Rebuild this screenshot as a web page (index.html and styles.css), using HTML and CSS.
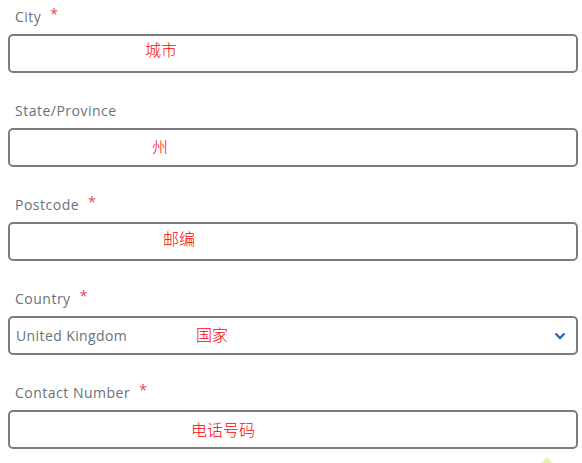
FILE: index.html
```html
<!DOCTYPE html>
<html>
<head>
<meta charset="utf-8">
<link rel="stylesheet" href="styles.css">
</head>
<body>
<form class="form">
  <div class="field">
    <label class="label">City<span class="req">*</span></label>
    <div class="input"><span class="note" style="left:135px;margin-top:-5px">城市</span></div>
  </div>
  <div class="field">
    <label class="label">State/Province</label>
    <div class="input"><span class="note" style="left:142px;margin-top:-2px">州</span></div>
  </div>
  <div class="field">
    <label class="label">Postcode<span class="req">*</span></label>
    <div class="input"><span class="note" style="left:153px;margin-top:-4px">邮编</span></div>
  </div>
  <div class="field">
    <label class="label">Country<span class="req">*</span></label>
    <div class="input select">
      <span class="value">United Kingdom</span>
      <span class="note" style="left:186px;margin-top:-2px">国家</span>
      <svg class="chev" width="12" height="8" viewBox="0 0 12 8"><path d="M1.5 1.5 L6 6 L10.5 1.5" fill="none" stroke="#2a6db5" stroke-width="2.4"/></svg>
    </div>
  </div>
  <div class="field">
    <label class="label">Contact Number<span class="req">*</span></label>
    <div class="input"><span class="note" style="left:181px;margin-top:-1px">电话号码</span></div>
  </div>
</form>
<div class="tip"></div>
</body>
</html>
```
FILE: styles.css
```css
html, body {
  margin: 0;
  padding: 0;
  background: #fff;
  overflow: hidden;
}
body {
  height: 463px;
  position: relative;
  font-family: "Open Sans", "Liberation Sans", sans-serif;
}
.form {
  padding: 7px 4px 0 8px;
  display: flex;
  flex-direction: column;
  gap: 28px;
}
.field {
  display: flex;
  flex-direction: column;
  gap: 7px;
}
.label {
  display: block;
  height: 20px;
  line-height: 20px;
  font-size: 14px;
  letter-spacing: 0.5px;
  color: #6a717c;
  padding-left: 7px;
}
.req {
  color: #e8435a;
  margin-left: 9px;
  font-size: 14px;
  position: relative;
  top: -3px;
}
.input {
  position: relative;
  box-sizing: border-box;
  height: 39px;
  border: 2px solid #7d7d7d;
  border-radius: 5px;
  background: #fff;
  display: flex;
  align-items: center;
}
.value {
  padding-left: 6px;
  font-size: 14px;
  letter-spacing: 0.4px;
  color: #6a717c;
}
.note {
  position: absolute;
  top: 50%;
  transform: translateY(-50%);
  font-family: "Noto Sans CJK SC", sans-serif;
  font-weight: 300;
  font-size: 16px;
  line-height: 20px;
  color: #f00;
}
.chev {
  position: absolute;
  right: 10px;
  top: 14px;
}
.tip {
  position: absolute;
  left: 541px;
  top: 457px;
  width: 0;
  height: 0;
  border-left: 6px solid transparent;
  border-right: 6px solid transparent;
  border-bottom: 6px solid #eef0b8;
}
```
